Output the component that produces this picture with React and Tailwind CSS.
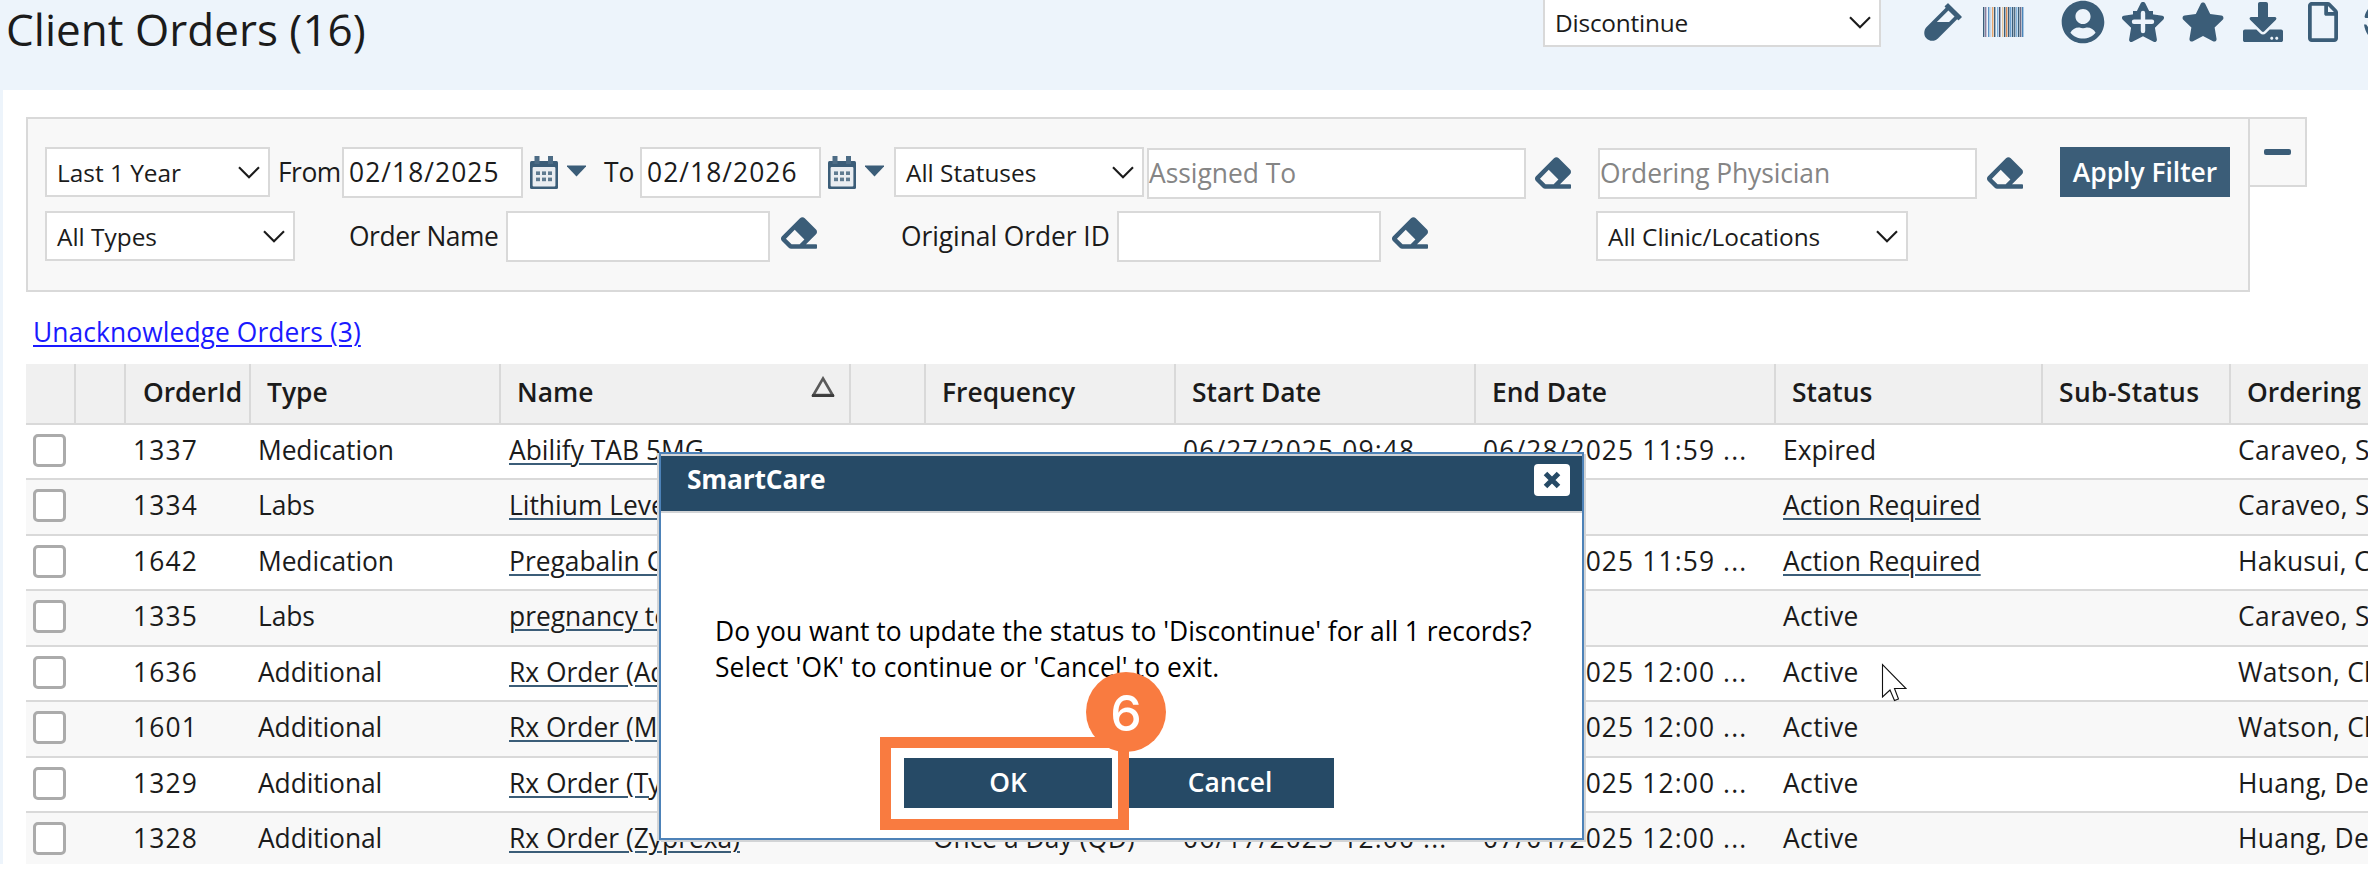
import { FaEraser, FaVial, FaUserCircle, FaStar, FaDownload, FaRegFile } from 'react-icons/fa';

function Chevron({ className = '' }) {
  return (
    <svg viewBox="0 0 22 13" className={`h-[13px] w-[22px] shrink-0 ${className}`} fill="none" stroke="#1b1b1b" strokeWidth="2.1">
      <path d="M1 1.2 L11 11.2 L21 1.2" />
    </svg>
  );
}

function Select({ label, className = '', text = '' }) {
  return (
    <div className={`flex h-[50px] shrink-0 items-center justify-between border-2 border-[#d9d9d9] bg-white pr-[8px] pl-[10px] text-[24.4px] text-[#1b1b1b] ${className}`}>
      <span className={`pt-[2px] ${text}`}>{label}</span>
      <Chevron />
    </div>
  );
}

function Field({ children, className = '' }) {
  return (
    <div className={`flex h-[51px] shrink-0 items-center border-2 border-[#d9d9d9] bg-white pb-px ${className}`}>
      <span>{children}</span>
    </div>
  );
}

function Calendar({ className = '' }) {
  return (
    <svg viewBox="0 0 28 33" className={`mt-[9px] h-[33px] w-[28px] shrink-0 ${className}`}>
      <rect x="0" y="5" width="28" height="28" rx="1.5" fill="#3b5d78" />
      <rect x="4.5" y="0" width="5" height="8" fill="#4d6c85" />
      <rect x="18" y="0" width="5" height="8" fill="#4d6c85" />
      <rect x="2.6" y="11" width="22.8" height="19.4" rx="1" fill="#e9edf1" />
      <g fill="#5f7b90">
        <rect x="6" y="15.4" width="4" height="3.6" />
        <rect x="12" y="15.4" width="4" height="3.6" />
        <rect x="18" y="15.4" width="4" height="3.6" />
        <rect x="6" y="21.6" width="4" height="3.6" />
        <rect x="12" y="21.6" width="4" height="3.6" />
        <rect x="18" y="21.6" width="4" height="3.6" />
      </g>
    </svg>
  );
}

function Caret({ className = '' }) {
  return (
    <svg viewBox="0 0 19 12" className={`mt-[18px] h-[12px] w-[19px] shrink-0 ${className}`}>
      <path d="M0 0.5 H19 V1.5 L9.5 11.5 L0 1.5 Z" fill="#3b5d78" />
    </svg>
  );
}

function Eraser({ className = '' }) {
  return <FaEraser className={`h-[36px] w-[36px] shrink-0 text-[#3b5d78] ${className}`} />;
}

const BARS = [
  [0, '#3b5d78'], [2, '#8f7fa0'], [5, '#5b93c4'], [7, '#c9d8e6'], [9, '#e8a56a'], [11, '#3b5d78'], [14, '#7fb3dd'], [16, '#4b4f6a'],
  [19, '#e6c9a4'], [21, '#3b5d78'], [23, '#d58b57'], [25, '#3b5d78'], [27, '#6aa0cf'], [29, '#3b5d78'], [31, '#4f6d86'], [33, '#84b5dc'], [35, '#3b5d78'], [37, '#6b6b86'], [39, '#4a86bb'],
];

function Header() {
  return (
    <header className="flex h-[90px] shrink-0 items-start bg-[#edf4fb] text-[#3b5d78]">
      <h1 className="w-[1543px] shrink-0 pl-[6px] text-[44px] leading-[58px] tracking-[0.03px] text-[#1b1b1b]">Client Orders (16)</h1>
      <Select label="Discontinue" className="-mt-[3px] w-[338px]" text="tracking-[-0.2px]" />
      <FaVial className="mt-[2px] ml-[43px] h-[40px] w-[38px] shrink-0" />
      <svg viewBox="0 0 41 30" className="mt-[7px] ml-[21px] h-[30px] w-[41px] shrink-0">
        {BARS.map(([x, c]) => (
          <rect key={x} x={x} y="0" width="1.4" height="30" fill={c} />
        ))}
      </svg>
      <FaUserCircle className="ml-[37px] h-[44px] w-[44px] shrink-0" />
      <svg viewBox="0 0 42 40" className="mt-[2px] ml-[17px] h-[40px] w-[42px] shrink-0 overflow-visible">
        <path d="M18.6 1.4 L13.4 12.1 L1.7 13.8 C-0.2 14.1 -0.6 16.1 0.6 17.4 L9.1 25.7 L7.1 37.4 C6.8 39.4 8.8 40.5 10.4 39.7 L21 34.2 L31.6 39.7 C33.2 40.5 35.2 39.4 34.9 37.4 L32.9 25.7 L41.4 17.4 C42.6 16.1 42.2 14.1 40.3 13.8 L28.6 12.1 L23.4 1.4 C22.4 -0.5 19.6 -0.5 18.6 1.4 Z" fill="currentColor" />
        <path d="M11 9 H31 V14 H34 V25 H8 V14 H11 Z" fill="currentColor" />
        <path d="M21 11 V29 M12 19.7 H30" stroke="#edf4fb" strokeWidth="4.4" strokeLinecap="round" />
      </svg>
      <FaStar className="mt-[2px] ml-[17px] h-[40px] w-[44px] shrink-0" />
      <FaDownload className="mt-[2px] ml-[18px] h-[40px] w-[40px] shrink-0" />
      <FaRegFile className="mt-[2px] ml-[20px] h-[40px] w-[40px] shrink-0" />
      <svg viewBox="0 0 4 26" className="mt-[9px] ml-auto h-[26px] w-[4px] shrink-0">
        <path d="M4 0 C2.6 2 1 5 0.6 7.5 C0.6 8.6 1.4 9 2.4 9 H4 Z M0 15.5 H2.2 L4 18 V26 C2 23 0.6 19.5 0 15.5 Z" fill="#3b5d78" />
      </svg>
    </header>
  );
}

function Filters() {
  return (
    <section className="mt-[27px] ml-[23px] flex items-start">
      <div className="flex h-[175px] w-[2224px] shrink-0 flex-col border-2 border-[#d9d9d9] bg-[#f8f8f8] pt-[28px] pl-[17px]">
        <div className="flex h-[51px] items-start leading-[50px]">
          <Select label="Last 1 Year" className="w-[225px]" />
          <span className="ml-[8px] w-[64px] shrink-0 tracking-[-0.5px]">From</span>
          <Field className="w-[181px] pl-[5px] tracking-[1.05px]">02/18/2025</Field>
          <Calendar className="ml-[7px]" />
          <Caret className="ml-[9px]" />
          <span className="ml-[18px] w-[36px] shrink-0">To</span>
          <Field className="w-[181px] pl-[5px] tracking-[1.05px]">02/18/2026</Field>
          <Calendar className="ml-[7px]" />
          <Caret className="ml-[9px]" />
          <Select label="All Statuses" className="ml-[10px] w-[250px]" />
          <Field className="mt-px ml-[3px] h-[49px] w-[379px] pb-[2px] text-[#858585]">Assigned To</Field>
          <Eraser className="mt-[8px] ml-[9px]" />
          <Field className="mt-px ml-[27px] h-[49px] w-[379px] pb-[2px] tracking-[-0.1px] text-[#858585]">Ordering Physician</Field>
          <Eraser className="mt-[8px] ml-[10px]" />
          <button className="ml-[37px] h-[50px] w-[170px] shrink-0 bg-[#3b5d78] leading-[49px] font-semibold text-white">Apply Filter</button>
        </div>
        <div className="mt-[13px] flex h-[51px] items-start leading-[50px]">
          <Select label="All Types" className="w-[250px]" />
          <span className="ml-[54px] w-[157px] shrink-0 tracking-[-0.42px]">Order Name</span>
          <Field className="w-[264px]" />
          <Eraser className="mt-[4px] ml-[11px]" />
          <span className="ml-[84px] w-[216px] shrink-0 tracking-[-0.06px]">Original Order ID</span>
          <Field className="w-[264px]" />
          <Eraser className="mt-[4px] ml-[11px]" />
          <Select label="All Clinic/Locations" className="ml-[168px] w-[312px]" />
        </div>
      </div>
      <div className="flex h-[70px] w-[57px] shrink-0 items-center justify-center border-2 border-l-0 border-[#d9d9d9] bg-[#f8f8f8]">
        <span className="h-[6px] w-[27px] rounded-[2px] bg-[#3b5d78]" />
      </div>
    </section>
  );
}

const GRID = 'grid shrink-0 grid-cols-[50px_50px_125px_250px_350px_75px_250px_300px_300px_267px_188px_139px]';

const HEADS = ['', '', 'OrderId', 'Type', 'Name', '', 'Frequency', 'Start Date', 'End Date', 'Status', 'Sub-Status', 'Ordering Physician'];

const ROWS = [
  ['1337', 'Medication', 'Abilify TAB 5MG', '', '06/27/2025 09:48', '06/28/2025 11:59 ...', 'Expired', 'Caraveo, Sara'],
  ['1334', 'Labs', 'Lithium Level', '', '', '', 'Action Required', 'Caraveo, Sara'],
  ['1642', 'Medication', 'Pregabalin CAP', '', '', '06/28/2025 11:59 ...', 'Action Required', 'Hakusui, Chris'],
  ['1335', 'Labs', 'pregnancy test', '', '', '', 'Active', 'Caraveo, Sara'],
  ['1636', 'Additional', 'Rx Order (Adderall)', '', '', '07/01/2025 12:00 ...', 'Active', 'Watson, Chris'],
  ['1601', 'Additional', 'Rx Order (Metformin)', '', '', '07/01/2025 12:00 ...', 'Active', 'Watson, Chris'],
  ['1329', 'Additional', 'Rx Order (Tylenol)', '', '', '07/01/2025 12:00 ...', 'Active', 'Huang, Deborah'],
  ['1328', 'Additional', 'Rx Order (Zyprexa)', 'Once a Day (QD)', '06/17/2025 12:00 ...', '07/01/2025 12:00 ...', 'Active', 'Huang, Deborah'],
];

const LINK = 'underline decoration-[#3b5d78] decoration-2 underline-offset-[3px]';

const HEAD_TEXT = {
  OrderId: 'pl-px tracking-[-0.1px]',
  'Sub-Status': 'tracking-[0.4px]',
};

function Table() {
  return (
    <section className="ml-[23px] flex flex-col overflow-hidden whitespace-nowrap">
      <div className={`${GRID} h-[61px] border-b-2 border-[#d9d9d9] bg-[#f0f0f0] leading-[56px] font-semibold`}>
        {HEADS.map((h, i) => (
          <div key={i} className="flex justify-between overflow-hidden border-r-2 border-[#d9d9d9] pl-[16px]">
            <span className={HEAD_TEXT[h]}>{h}</span>
            {h === 'Name' && (
              <svg viewBox="0 0 24 22" className="mt-[12px] mr-[14px] h-[22px] w-[24px]">
                <path d="M12 2.5 L21.6 19 H2.4 Z" fill="none" stroke="#5a5a5a" strokeWidth="2.6" />
                <path d="M1 19.6 H23" stroke="#3c3c3c" strokeWidth="2.8" />
              </svg>
            )}
          </div>
        ))}
      </div>
      {ROWS.map(([id, type, name, freq, start, end, status, doc], i) => (
        <div key={id} className={`${GRID} items-center border-b-2 border-[#d9d9d9] pb-px ${i % 2 ? 'h-[56px] bg-[#f8f8f8]' : 'h-[55px] bg-white'}`}>
          <div className="pb-px pl-[7px]">
            <div className="h-[33px] w-[33px] rounded-[5px] border-3 border-[#ababab] bg-white" />
          </div>
          <div />
          <div className="pl-[7px] tracking-[1.2px]">{id}</div>
          <div className="pl-[7px] tracking-[-0.1px]">{type}</div>
          <div className="pl-[8px]"><span className={LINK}>{name}</span></div>
          <div />
          <div className="pl-[7px]">{freq}</div>
          <div className="pl-[7px] tracking-[1.12px]">{start}</div>
          <div className="pl-[7px] tracking-[1.12px]">{end}</div>
          <div className="pl-[7px]"><span className={status === 'Action Required' ? `${LINK} tracking-[0.1px]` : status === 'Active' ? 'tracking-[0.4px]' : ''}>{status}</span></div>
          <div />
          <div className="pl-[7px] tracking-[0.3px]">{doc}</div>
        </div>
      ))}
    </section>
  );
}

function Dialog() {
  return (
    <div className="absolute top-[452px] left-[659px] flex h-[388px] w-[925px] flex-col border-2 border-[#4d82b8] bg-white text-black shadow-[-2px_1px_0_#d2d4d6,2px_2px_0_#d2d4d6]">
      <div className="flex h-[59px] items-start justify-between border-y-2 border-[#d2d4d6] bg-[#264a66] pr-[12px] pl-[26px] text-white">
        <span className="leading-[46px] font-bold tracking-[-0.2px]">SmartCare</span>
        <span className="mt-[8px] flex h-[32px] w-[36px] items-center justify-center rounded-[4px] bg-white">
          <svg viewBox="0 0 18 18" className="h-[18px] w-[18px]">
            <path d="M2.5 2.5 L15.5 15.5 M15.5 2.5 L2.5 15.5" stroke="#264a66" strokeWidth="5" />
          </svg>
        </span>
      </div>
      <p className="mt-[100px] pl-[54px] leading-[36px] tracking-[-0.02px] whitespace-nowrap">
        Do you want to update the status to 'Discontinue' for all 1 records?
        <br />
        <span className="tracking-[0.12px]">Select 'OK' to continue or 'Cancel' to exit.</span>
      </p>
      <div className="mt-[73px] ml-[243px] flex gap-[14px]">
        <button className="h-[50px] w-[208px] bg-[#264a66] pb-px font-semibold text-white">OK</button>
        <button className="h-[50px] w-[208px] bg-[#264a66] pb-px font-semibold text-white">Cancel</button>
      </div>
    </div>
  );
}

export default function App() {
  return (
    <div className="relative flex h-[878px] w-[2368px] flex-col overflow-hidden bg-white font-['Open_Sans','Noto_Sans',sans-serif] text-[26.4px] text-[#1b1b1b]">
      <Header />
      <main className="flex h-[774px] shrink-0 flex-col overflow-hidden border-l-3 border-[#edf4fb]">
        <Filters />
        <a className="mt-[22px] mb-[10px] ml-[30px] h-[40px] self-start leading-[37px] tracking-[0.08px] text-[#1a1aff] underline decoration-2 underline-offset-[3px]">Unacknowledge Orders (3)</a>
        <Table />
      </main>
      <Dialog />
      <div className="absolute top-[737px] left-[880px] h-[93px] w-[249px] border-[11px] border-[#f97b40]" />
      <div className="absolute top-[672px] left-[1086px] flex h-[80px] w-[80px] items-center justify-center rounded-full bg-[#f97b40] pt-[2px] font-['Inter',sans-serif] text-[50px] leading-none font-medium text-white">6</div>
      <svg viewBox="0 0 26 39" className="absolute top-[663px] left-[1881px] h-[39px] w-[26px]">
        <path d="M1.5 1.5 V34 L9 27 L13.5 37.5 L17.5 36 L13.5 25.5 H25 Z" fill="#fff" stroke="#111" strokeWidth="1.1" />
      </svg>
    </div>
  );
}
